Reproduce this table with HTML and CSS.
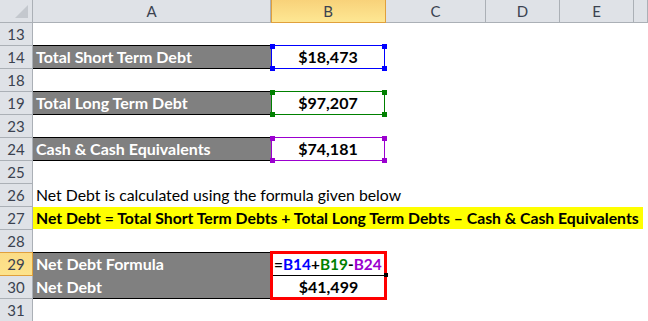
FILE: index.html
```html
<!DOCTYPE html>
<html>
<head>
<meta charset="utf-8">
<link rel="stylesheet" href="styles.css">
</head>
<body>
<div class="sheet">
  <div class="ch corner"><span class="tri"></span></div>
  <div class="ch">A</div>
  <div class="ch sel">B</div>
  <div class="ch">C</div>
  <div class="ch">D</div>
  <div class="ch">E</div>
  <div class="ch"></div>

  <div class="rh">13</div>
  <div class="c span"></div>

  <div class="rh">14</div>
  <div class="c dark">Total Short Term Debt</div>
  <div class="c"><div class="val blue">$18,473<i class="h tl"></i><i class="h tr"></i><i class="h bl"></i><i class="h br"></i></div></div>
  <div class="c rest"></div>

  <div class="rh">18</div>
  <div class="c span"></div>

  <div class="rh">19</div>
  <div class="c dark">Total Long Term Debt</div>
  <div class="c"><div class="val green">$97,207<i class="h tl"></i><i class="h tr"></i><i class="h bl"></i><i class="h br"></i></div></div>
  <div class="c rest"></div>

  <div class="rh">23</div>
  <div class="c span"></div>

  <div class="rh">24</div>
  <div class="c dark">Cash &amp; Cash Equivalents</div>
  <div class="c"><div class="val purple">$74,181<i class="h tl"></i><i class="h tr"></i><i class="h bl"></i><i class="h br"></i></div></div>
  <div class="c rest"></div>

  <div class="rh">25</div>
  <div class="c span"></div>

  <div class="rh">26</div>
  <div class="c span text">Net Debt is calculated using the formula given below</div>

  <div class="rh">27</div>
  <div class="c span"><div class="hl">Net Debt = Total Short Term Debts + Total Long Term Debts – Cash &amp; Cash Equivalents</div></div>

  <div class="rh">28</div>
  <div class="c span"></div>

  <div class="rh sel">29</div>
  <div class="c dark top">Net Debt Formula</div>
  <div class="c formula">=<span class="fb">B14</span>+<span class="fg">B19</span>-<span class="fp">B24</span><div class="redbox"><i class="fill"></i></div></div>
  <div class="c rest"></div>

  <div class="rh">30</div>
  <div class="c dark bottom">Net Debt</div>
  <div class="c result">$41,499</div>
  <div class="c rest"></div>

  <div class="rh">31</div>
  <div class="c span"></div>
</div>
</body>
</html>
```

FILE: styles.css
```css
html, body {
  margin: 0;
  padding: 0;
  background: #fff;
}
body {
  font-family: Lato, "Open Sans", sans-serif;
  font-size: 16px;
  color: #000;
}
.sheet {
  display: grid;
  grid-template-columns: 33px 238px 115px 100px 74px 74px 14px;
  grid-template-rows: 23px;
  grid-auto-rows: 23px;
  width: 648px;
  height: 321px;
  overflow: hidden;
}
.ch {
  box-sizing: border-box;
  background: #dfe2e7;
  border-right: 1px solid #abb0b6;
  border-bottom: 1px solid #abb0b6;
  color: #3b4250;
  font-size: 15px;
  line-height: 22px;
  text-align: center;
}
.ch.sel {
  background: linear-gradient(#f8d27a, #fee793);
  border-right-color: #e0a03c;
  border-bottom-color: #e0a03c;
  box-shadow: inset 1px 0 0 #e0a03c;
}
.corner {
  position: relative;
}
.tri {
  position: absolute;
  right: 4px;
  bottom: 4px;
  width: 0;
  height: 0;
  border-left: 13px solid transparent;
  border-bottom: 13px solid #c4c8ce;
}
.rh {
  grid-column: 1;
  box-sizing: border-box;
  background: #dfe2e7;
  border-right: 1px solid #abb0b6;
  border-bottom: 1px solid #abb0b6;
  color: #3b4250;
  font-size: 15px;
  line-height: 22px;
  text-align: center;
}
.rh.sel {
  background: linear-gradient(#fbdc86, #fde38c);
  border-bottom-color: #e0a03c;
  box-shadow: 0 -1px 0 #e0a03c;
  border-right-color: #e0a03c;
}
.c {
  box-sizing: border-box;
  line-height: 22px;
  white-space: nowrap;
  position: relative;
}
.span {
  grid-column: 2 / -1;
}
.rest {
  grid-column: 4 / -1;
}
.text {
  padding-left: 3px;
  font-size: 15.8px;
}
.dark {
  background: #808080;
  color: #fff;
  font-weight: bold;
  padding-left: 3px;
  border-bottom: 1px solid #000;
  box-shadow: 0 -1px 0 #000;
}
.dark.top {
  border-bottom: 0;
}
.dark.bottom {
  box-shadow: none;
}
.val {
  position: relative;
  box-sizing: border-box;
  margin-top: -1px;
  width: 114px;
  height: 24px;
  border: 1px solid;
  font-weight: bold;
  text-align: center;
  line-height: 22px;
}
.val.blue { border-color: #0000ff; }
.val.green { border-color: #008000; }
.val.purple { border-color: #9b00cf; }
.h {
  position: absolute;
  width: 5px;
  height: 5px;
}
.blue .h { background: #0000ff; }
.green .h { background: #008000; }
.purple .h { background: #9b00cf; }
.h.tl { left: -2px; top: -2px; }
.h.tr { right: -3px; top: -2px; }
.h.bl { left: -2px; bottom: -3px; }
.h.br { right: -3px; bottom: -3px; }
.hl {
  background: #ffff00;
  font-weight: bold;
  font-size: 15.75px;
  padding-left: 3px;
  margin-right: 5px;
  height: 22px;
}
.formula {
  font-weight: bold;
  font-size: 15.4px;
  padding-left: 3px;
  border-bottom: 1px solid #000;
}
.fb { color: #0000ff; }
.fg { color: #008000; }
.fp { color: #9b00cf; }
.result {
  font-weight: bold;
  text-align: center;
}
.redbox {
  position: absolute;
  left: -1px;
  top: -2px;
  width: 117px;
  height: 49px;
  box-sizing: border-box;
  border: 3px solid #ff0000;
  z-index: 2;
}
.fill {
  position: absolute;
  right: -4px;
  top: 19px;
  width: 4px;
  height: 4px;
  background: #000;
}
```
